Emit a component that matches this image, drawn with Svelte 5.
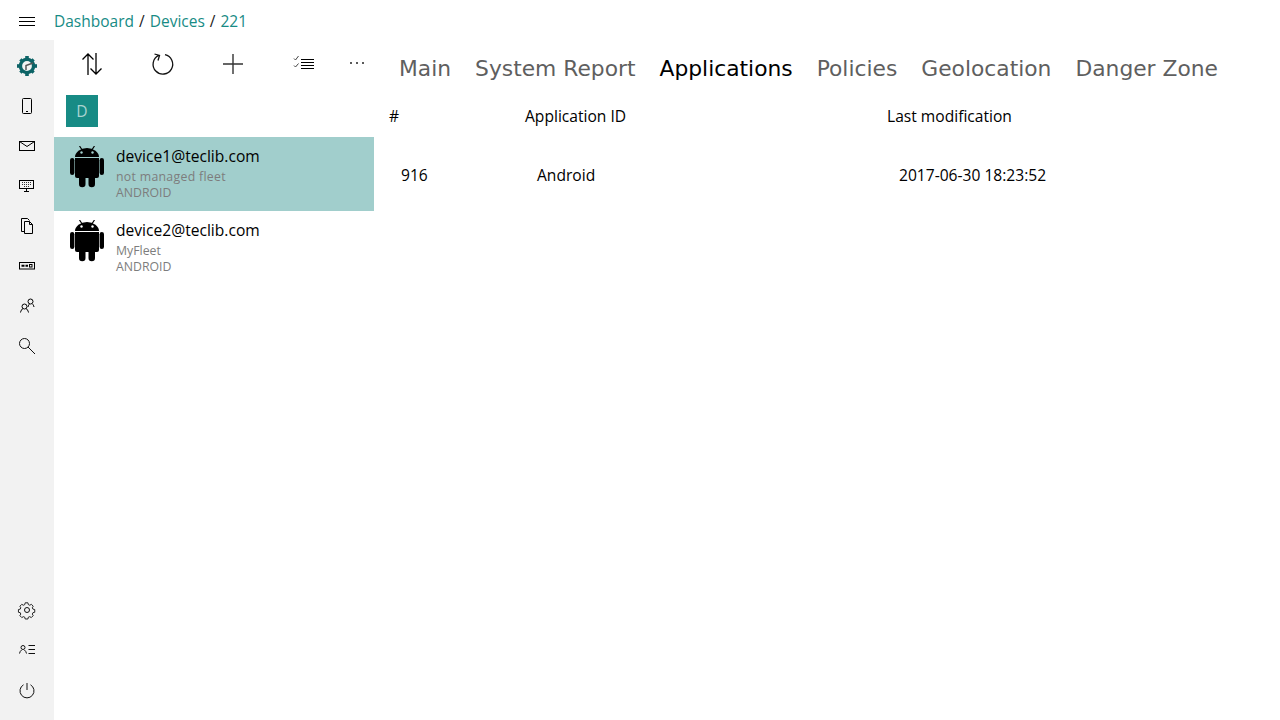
<script>
  const topNav = ["logo", "phone", "mail", "keyboard", "files", "tag", "users", "search"];
  const devices = [
    { name: "device1@teclib.com", fleet: "not managed fleet", type: "ANDROID", selected: true },
    { name: "device2@teclib.com", fleet: "MyFleet", type: "ANDROID", selected: false },
  ];
  const tabs = ["Main", "System Report", "Applications", "Policies", "Geolocation", "Danger Zone"];
</script>

{#snippet navIcon(name)}
  <svg width="20" height="20" viewBox="0 0 20 20" fill="none" stroke="#000" stroke-width="1">
    {#if name === "logo"}
      <circle cx="10" cy="10" r="6.600" stroke="#0c6366" stroke-width="3.400" />
      <g fill="#0c6366" stroke="none">
        <rect x="8.200" y="0" width="3.600" height="3" />
        <rect x="8.200" y="17" width="3.600" height="3" />
        <rect x="0" y="8.200" width="3" height="3.600" />
        <rect x="17" y="8.200" width="3" height="3.600" />
        <rect x="8.400" y="0.600" width="3.200" height="3" transform="rotate(45 10 10)" />
        <rect x="8.400" y="16.400" width="3.200" height="3" transform="rotate(45 10 10)" />
        <rect x="0.600" y="8.400" width="3" height="3.200" transform="rotate(45 10 10)" />
        <rect x="16.400" y="8.400" width="3" height="3.200" transform="rotate(45 10 10)" />
      </g>
      <path d="M9 14V9.500L16 7" stroke="#555" stroke-width="1.500" />
    {:else if name === "phone"}
      <rect x="5.500" y="2.500" width="9" height="15" rx="1" />
      <path d="M9 15.500h2" />
    {:else if name === "mail"}
      <rect x="2.500" y="5.500" width="15" height="9" />
      <path d="M2.500 5.500 10 10.500l7.500-5" />
    {:else if name === "keyboard"}
      <rect x="2.500" y="4.500" width="14" height="8" />
      <path d="M5 6.500h9M5 8.500h9M7 10.500h5" stroke-dasharray="1 1" stroke-width=".8" />
      <path d="M9.500 12.500v2.500M7 15.500h5" />
    {:else if name === "files"}
      <path d="M8 15.500H4.500V2.500h6l2 2" />
      <path d="M7.500 5.500h5l3 3v9h-8z" />
      <path d="M12.500 5.500v3h3" />
    {:else if name === "tag"}
      <rect x="2.500" y="6.500" width="15" height="6.500" />
      <path d="M4.500 9.750h3M8.500 9.750h2.500" stroke-width="2" />
      <rect x="12.500" y="8.500" width="2.500" height="2.500" />
    {:else if name === "users"}
      <circle cx="7.500" cy="10.500" r="2.500" />
      <path d="M3.500 16.500c.4-2 1.500-3.500 2.500-4M11.500 16.500c-.4-2-1.500-3.500-2.500-4" />
      <circle cx="13.500" cy="5.500" r="2.500" />
      <path d="M11 11c.3-1.500 1-2.500 1.500-3M17 11c-.3-1.500-1-2.500-1.500-3" />
    {:else if name === "search"}
      <circle cx="7.500" cy="7.500" r="5" stroke="#111" />
      <path d="M11 11 18 18" stroke="#111" />
    {:else if name === "gear"}
      <circle cx="10" cy="10" r="2.500" stroke="#111" />
      <path stroke="#111" d="M8.500 2.500h3l.5 2 1.500.7 1.900-1 2 2.100-1 1.800.7 1.400 2 .5v3l-2 .5-.7 1.500 1 1.800-2.100 2.100-1.800-1-1.500.6-.5 2h-3l-.5-2-1.500-.6-1.800 1-2.100-2.100 1-1.800-.6-1.500-2-.5v-3l2-.5.6-1.400-1-1.800 2.100-2.100 1.800 1 1.500-.7z" transform="translate(.55 .55) scale(.9)" />
    {:else if name === "account"}
      <circle cx="6" cy="7.500" r="2" stroke="#111" />
      <path stroke="#111" d="M2.500 13.500c.3-1.500 1-2.800 2.200-3.600M9.500 13.500c-.3-1.500-1-2.800-2.200-3.600M11.500 5.500h6.500M11.500 9.500h6.500M11.500 13.500h6.500" />
    {:else if name === "power"}
      <path stroke="#111" d="M6.500 4.800a7 7 0 1 0 7 0M10 3v7" />
    {/if}
  </svg>
{/snippet}

<div class="app">
  <header class="topbar">
    <div class="burger">
      <svg width="16" height="10" viewBox="0 0 16 10" stroke="#000" stroke-width="1"><path d="M0 .5h16M0 4.500h16M0 8.500h16" /></svg>
    </div>
    <nav class="crumbs"><a>Dashboard</a><span class="sep">/</span><a>Devices</a><span class="sep">/</span><a>221</a></nav>
  </header>

  <div class="body">
    <aside class="rail">
      <div class="rail-group">
        {#each topNav as n}
          <div class="rail-item">{@render navIcon(n)}</div>
        {/each}
      </div>
      <div class="rail-group">
        {#each ["gear", "account", "power"] as n}
          <div class="rail-item">{@render navIcon(n)}</div>
        {/each}
      </div>
    </aside>

    <section class="list">
      <div class="toolbar">
        <button class="tool">
          <svg width="22" height="24" viewBox="0 0 22 24" fill="none" stroke="#000" stroke-width="1.300"><path d="M7 23V2M1.500 7.500 7 2l5.500 5.500M15 1v21M9.500 16.500 15 22l5.500-5.500" /></svg>
        </button>
        <button class="tool">
          <svg width="24" height="24" viewBox="0 0 24 24" fill="none" stroke="#111" stroke-width="1.300"><path d="M14 2.700A9.800 9.800 0 1 1 7.500 3.500M3.500 2 8.500 3.500 7 8.500" /></svg>
        </button>
        <button class="tool">
          <svg width="22" height="22" viewBox="0 0 22 22" stroke="#333" stroke-width="1.400"><path d="M11 1v20M1 11h20" /></svg>
        </button>
        <button class="tool list-tool">
          <svg width="22" height="18" viewBox="0 0 22 18" fill="none" stroke="#000" stroke-width="1"><path d="M8 4.500h13M8 7.500h13M8 10.500h13M8 13.500h13" /><path d="M1 3.500 2.500 5 5.500 1M1 10.500 2.500 12 5.500 8.500" stroke="#444" /></svg>
        </button>
        <button class="tool more">
          <svg width="16" height="4" viewBox="0 0 16 4" fill="#222"><circle cx="2" cy="2" r="1" /><circle cx="8" cy="2" r="1" /><circle cx="14" cy="2" r="1" /></svg>
        </button>
      </div>
      <div class="letter">D</div>
      {#each devices as d}
        <div class="device" class:selected={d.selected}>
          <svg class="droid" width="34" height="42" viewBox="0 0 34 42" fill="#000">
            <path d="M5 11a12 9 0 0 1 24 0z" />
            <path d="M9.500 0 12.500 4.500M24.500 0 21.500 4.500" stroke="#000" stroke-width="1.200" />
            <path d="M5 12h24v18a2 2 0 0 1-2 2H7a2 2 0 0 1-2-2z" />
            <rect x="0" y="12" width="4.400" height="17" rx="2.200" />
            <rect x="29.600" y="12" width="4.400" height="17" rx="2.200" />
            <path d="M9 31h6.500v7a3.250 3.250 0 0 1-6.500 0z" />
            <path d="M18.500 31H25v7a3.250 3.250 0 0 1-6.500 0z" />
            <circle class="eye" cx="11.500" cy="6.500" r="1.200" />
            <circle class="eye" cx="22.500" cy="6.500" r="1.200" />
          </svg>
          <div class="device-text">
            <div class="device-name">{d.name}</div>
            <div class="device-sub" class:wide={d.selected}>{d.fleet}</div>
            <div class="device-sub">{d.type}</div>
          </div>
        </div>
      {/each}
    </section>

    <main class="content">
      <div class="tabs">
        {#each tabs as t}
          <span class="tab" class:active={t === "Applications"}>{t}</span>
        {/each}
      </div>
      <div class="row head">
        <span class="c1">#</span><span class="c2">Application ID</span><span>Last modification</span>
      </div>
      <div class="row data">
        <span class="c1">916</span><span class="c2">Android</span><span>2017-06-30 18:23:52</span>
      </div>
    </main>
  </div>
</div>

<style>
  :global(body) {
    margin: 0;
    background: #fff;
  }
  .app {
    width: 1280px;
    height: 720px;
    display: flex;
    flex-direction: column;
    overflow: hidden;
    font-family: "Open Sans", "Noto Sans", sans-serif;
    font-size: 15.6px;
    color: #000;
  }
  .topbar {
    height: 40px;
    flex: none;
    display: flex;
    align-items: center;
  }
  .burger {
    width: 54px;
    display: flex;
    justify-content: center;
    padding-top: 4px;
    box-sizing: border-box;
  }
  .crumbs {
    color: #222;
    font-size: 15.5px;
    padding-top: 1px;
  }
  .crumbs a {
    color: #178b85;
  }
  .sep {
    margin: 0 5px;
  }
  .body {
    flex: 1;
    display: flex;
    min-height: 0;
  }
  .rail {
    width: 54px;
    flex: none;
    background: #f2f2f2;
    display: flex;
    flex-direction: column;
    justify-content: space-between;
    padding: 6px 0 10px;
    box-sizing: border-box;
  }
  .rail-item {
    height: 40px;
    display: flex;
    align-items: center;
    justify-content: center;
  }
  .list {
    width: 320px;
    flex: none;
  }
  .toolbar {
    height: 48px;
    display: grid;
    grid-template-columns: repeat(4, 70.4px) 37px;
    padding-left: 3px;
    align-items: center;
  }
  .tool {
    padding: 0;
    border: 0;
    background: none;
    display: flex;
    align-items: center;
    justify-content: center;
  }
  .list-tool {
    padding-left: 2px;
  }
  .more {
    padding-bottom: 2px;
  }
  .letter {
    width: 32px;
    height: 32px;
    margin: 7px 0 10px 12px;
    background: #178b85;
    color: #a9d3d1;
    font-size: 15.6px;
    display: flex;
    align-items: center;
    justify-content: center;
  }
  .device {
    height: 74px;
    display: flex;
    gap: 12px;
    padding: 9px 16px 0;
    box-sizing: border-box;
  }
  .device.selected {
    background: #a1cecc;
  }
  .droid {
    flex: none;
  }
  .eye {
    fill: #fff;
  }
  .device.selected .eye {
    fill: #a1cecc;
  }
  .device-name {
    font-size: 15.6px;
    line-height: 20px;
    margin-bottom: 3px;
  }
  .device-sub {
    font-size: 12.3px;
    line-height: 16px;
    color: #7d7d7d;
  }
  .device-sub.wide {
    letter-spacing: 0.3px;
  }
  .content {
    flex: 1;
    min-width: 0;
  }
  .tabs {
    display: flex;
    gap: 24px;
    padding: 13px 0 0 25px;
    height: 56px;
    box-sizing: border-box;
  }
  .tab {
    font-family: "DejaVu Sans", sans-serif;
    font-size: 21.8px;
    line-height: 32px;
    color: #5f5f5f;
  }
  .tab.active {
    color: #000;
  }
  .row {
    display: grid;
    grid-template-columns: 136px 362px 1fr;
  }
  .head {
    padding: 9px 0 0 15px;
  }
  .data {
    padding: 37px 0 0 27px;
  }
</style>
